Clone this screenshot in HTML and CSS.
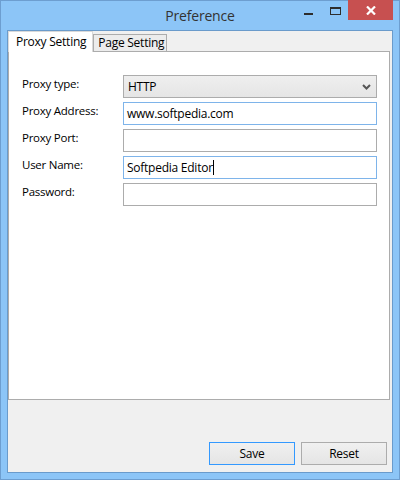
FILE: index.html
```html
<!DOCTYPE html>
<html lang="en">
<head>
    <meta charset="UTF-8">
    <title>Preference</title>
    <link rel="stylesheet" href="styles.css">
</head>
<body>
    <div class="window">
        <div class="titlebar">
            <span></span>
            <span class="title">Preference</span>
            <div class="controls">
                <span class="ctl ctl-min"><i class="min-bar"></i></span>
                <span class="ctl ctl-max"><i class="max-box"></i></span>
                <span class="ctl ctl-close">
                    <svg width="10" height="9" viewBox="0 0 10 9">
                        <path d="M1 0.5 L9 8.5 M9 0.5 L1 8.5" stroke="#fff" stroke-width="2.2" fill="none"/>
                    </svg>
                </span>
            </div>
        </div>
        <div class="client">
            <div class="tabs">
                <span class="tab active">Proxy Setting</span>
                <span class="tab">Page Setting</span>
            </div>
            <div class="panel">
                <form class="proxy-form">
                    <label for="type">Proxy type:</label>
                    <div class="select" id="type">
                        <span>HTTP</span>
                        <svg width="9" height="6" viewBox="0 0 9 6">
                            <path d="M1 1 L4.5 4.5 L8 1" stroke="#555" stroke-width="2" fill="none"/>
                        </svg>
                    </div>
                    <label for="address">Proxy Address:</label>
                    <div class="field hot" id="address">www.softpedia.com</div>
                    <label for="port">Proxy Port:</label>
                    <div class="field" id="port"></div>
                    <label for="user">User Name:</label>
                    <div class="field hot" id="user">Softpedia Editor<i class="caret"></i></div>
                    <label for="password">Password:</label>
                    <div class="field" id="password"></div>
                </form>
            </div>
            <div class="footer">
                <button type="button" class="btn default">Save</button>
                <button type="button" class="btn">Reset</button>
            </div>
        </div>
    </div>
</body>
</html>
```

FILE: styles.css
```css
body {
    margin: 0;
    font-family: "Open Sans", "Noto Sans", sans-serif;
    font-size: 11.5px;
    letter-spacing: -0.25px;
    color: #000;
}

.window {
    width: 400px;
    height: 480px;
    box-sizing: border-box;
    background-color: #8cc5f7;
    border: 1px solid #6d9ed0;
    padding: 0 6px 6px 6px;
    display: flex;
    flex-direction: column;
}

.titlebar {
    height: 30px;
    margin-top: -1px;
    display: grid;
    grid-template-columns: 1fr auto 1fr;
    align-items: start;
}

.title {
    font-size: 14px;
    letter-spacing: -0.2px;
    color: #333;
    line-height: 30px;
    padding-top: 1px;
}

.controls {
    justify-self: end;
    display: flex;
}

.ctl {
    height: 20px;
    display: flex;
    align-items: center;
    justify-content: center;
}

.ctl-min {
    width: 27px;
}

.ctl-max {
    width: 26px;
}

.ctl-close {
    width: 45px;
    background-color: #c75050;
}

.min-bar {
    width: 9px;
    height: 2px;
    background-color: #2d2d2d;
    margin-top: 7px;
}

.max-box {
    width: 9px;
    height: 5px;
    border: 1px solid #2d2d2d;
    border-top-width: 2px;
    margin-top: 2px;
}

.client {
    flex: 1;
    background-color: #f0f0f0;
    border: 1px solid #6a9bcb;
    display: flex;
    flex-direction: column;
}

.tabs {
    display: flex;
    align-items: flex-end;
    height: 20px;
    position: relative;
    z-index: 1;
}

.tab {
    box-sizing: border-box;
    height: 17px;
    padding: 0 2px 0 4px;
    border: 1px solid #acacac;
    border-bottom: none;
    background-color: #ececec;
    line-height: 16px;
    font-size: 12px;
    color: #000;
}

.tab.active {
    height: 21px;
    margin-bottom: -1px;
    padding: 0 6px 0 7px;
    background-color: #fff;
    border-color: #d9d9d9;
    line-height: 19px;
}

.panel {
    box-sizing: border-box;
    height: 349px;
    margin-right: 2px;
    background-color: #fff;
    border: 1px solid #acacac;
}

.proxy-form {
    display: grid;
    grid-template-columns: 101px 254px;
    grid-auto-rows: 23px;
    row-gap: 4px;
    padding: 23px 0 0 13px;
}

.proxy-form label {
    line-height: 16px;
    padding-top: 1px;
}

.select,
.field {
    box-sizing: border-box;
    border: 1px solid #acacac;
    padding: 0 4px;
    line-height: 21px;
    font-size: 12px;
    white-space: nowrap;
}

.select {
    display: flex;
    justify-content: space-between;
    align-items: center;
    background: linear-gradient(#efefef, #e5e5e5);
}

.select svg {
    margin-right: 1px;
}

.field {
    background-color: #fff;
    padding: 0 3px;
}

.field.hot {
    border-color: #7eb4ea;
}

.caret {
    display: inline-block;
    width: 1px;
    height: 15px;
    background-color: #000;
    vertical-align: -3px;
}

.footer {
    flex: 1;
    display: flex;
    justify-content: flex-end;
    align-items: flex-end;
    gap: 6px;
    padding: 0 5px 7px 0;
}

.btn {
    width: 86px;
    height: 23px;
    box-sizing: border-box;
    border: 1px solid #acacac;
    background: linear-gradient(#f0f0f0, #e5e5e5);
    font-family: "Open Sans", "Noto Sans", sans-serif;
    font-size: 12px;
    letter-spacing: -0.25px;
    color: #000;
    padding: 0;
}

.btn.default {
    border-color: #3399ff;
}
```
